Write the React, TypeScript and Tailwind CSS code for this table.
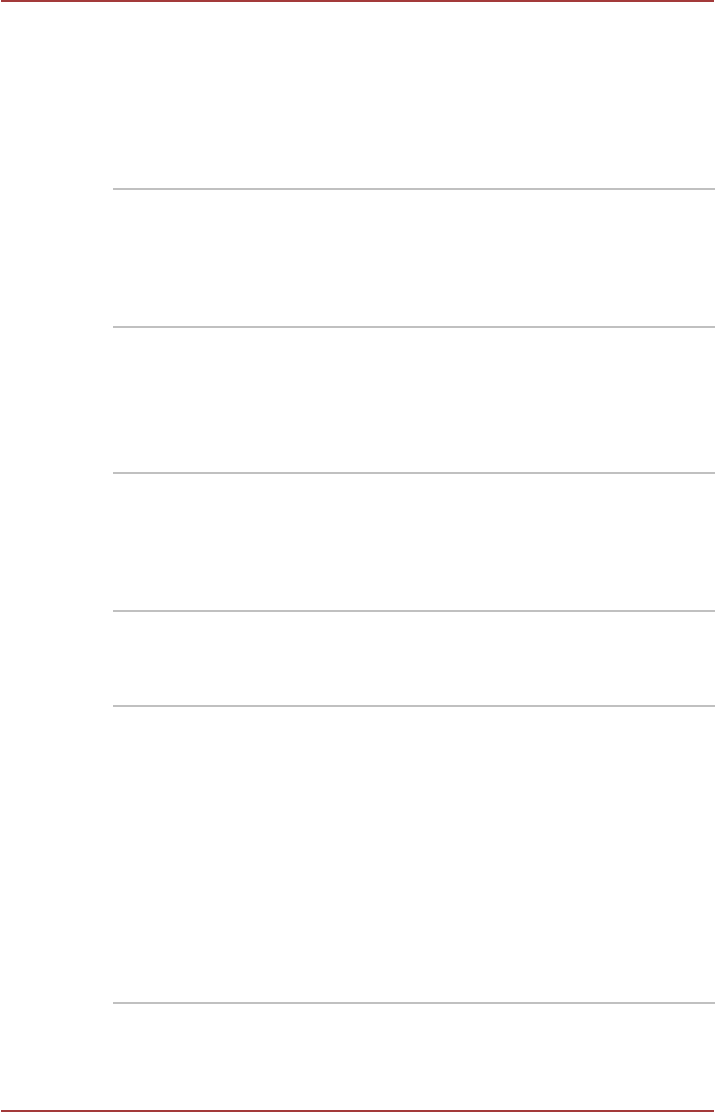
import React from "react";

// blank manual page: red rules top & bottom, gray table row separators
const rows = [138, 146, 138, 95, 297, 108];

export default function App() {
  return (
    <div className="w-[715px] h-[1113px] bg-white flex flex-col" style={{ fontFamily: "'Liberation Sans', Arial, sans-serif" }}>
      <div className="h-[2px] ml-[1px] mr-[1px] bg-[#a33a3a] shrink-0"></div>
      <div className="h-[186px] shrink-0"></div>
      <div className="pl-[113px] flex flex-col">
        {rows.map((h, idx) => (
          <div key={idx} className="border-t-[2px] border-[#c0c0c0] shrink-0" style={{ height: h }}></div>
        ))}
      </div>
      <div className="h-[2px] ml-[1px] mr-[1px] bg-[#a33a3a] shrink-0"></div>
    </div>
  );
}
